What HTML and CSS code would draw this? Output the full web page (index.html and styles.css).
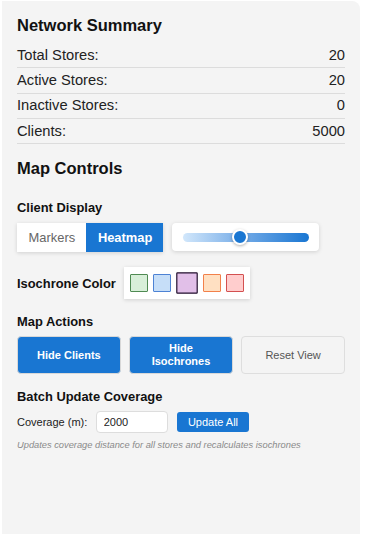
FILE: index.html
```html
<!DOCTYPE html>
<html lang="en">
  <head>
    <meta charset="UTF-8" />
    <meta name="viewport" content="width=device-width, initial-scale=1.0" />
    <title>Network Summary</title>
    <link rel="stylesheet" href="styles.css">
  </head>
  <body>
    <div class="panel">
      <h2>Network Summary</h2>
      <div class="summary">
        <div class="stat-row"><span>Total Stores:</span><span>20</span></div>
        <div class="stat-row"><span>Active Stores:</span><span>20</span></div>
        <div class="stat-row"><span>Inactive Stores:</span><span>0</span></div>
        <div class="stat-row"><span>Clients:</span><span>5000</span></div>
      </div>

      <h2 class="controls-title">Map Controls</h2>

      <div class="group">
        <h3>Client Display</h3>
        <div class="display-row">
          <div class="toggle">
            <button class="toggle-btn">Markers</button>
            <button class="toggle-btn active">Heatmap</button>
          </div>
          <div class="slider-card">
            <div class="track">
              <span class="thumb"></span>
            </div>
          </div>
        </div>
      </div>

      <div class="group color-row">
        <h3>Isochrone Color</h3>
        <div class="swatches">
          <span class="swatch green"></span>
          <span class="swatch blue"></span>
          <span class="swatch purple selected"></span>
          <span class="swatch orange"></span>
          <span class="swatch red"></span>
        </div>
      </div>

      <div class="group">
        <h3>Map Actions</h3>
        <div class="actions">
          <button class="action primary">Hide Clients</button>
          <button class="action primary">Hide Isochrones</button>
          <button class="action secondary">Reset View</button>
        </div>
      </div>

      <div class="group">
        <h3>Batch Update Coverage</h3>
        <div class="coverage-row">
          <label for="coverage">Coverage (m):</label>
          <input type="number" id="coverage" value="2000" />
          <button class="update-btn">Update All</button>
        </div>
        <p class="hint">Updates coverage distance for all stores and recalculates isochrones</p>
      </div>
    </div>
  </body>
</html>
```

FILE: styles.css
```css
body {
  font-family: "Liberation Sans", Arial, sans-serif;
  background: #ffffff;
  margin: 0;
  padding: 1px 0 0 2px;
  color: #222;
  overflow: hidden;
}

.panel {
  width: 358px;
  height: 533px;
  box-sizing: border-box;
  background: #f4f4f4;
  border-radius: 0 8px 0 0;
  padding: 15px 15px;
}

h2 {
  margin: 0 0 8px;
  font-size: 16.5px;
  line-height: 19px;
  font-weight: bold;
  color: #111;
}

h3 {
  margin: 0 0 7.5px;
  font-size: 12.9px;
  line-height: 15px;
  font-weight: bold;
  color: #111;
}

.summary {
  margin-bottom: 15px;
}

.stat-row {
  display: flex;
  justify-content: space-between;
  font-size: 14.7px;
  line-height: 17px;
  padding: 3.7px 0 3.6px;
  border-bottom: 1px solid #dcdcdc;
  color: #222;
}

.controls-title {
  margin-bottom: 22px;
}

.group {
  margin-bottom: 15px;
}

.display-row {
  display: flex;
  align-items: center;
  gap: 8.5px;
}

.toggle {
  display: flex;
  height: 29.6px;
  box-shadow: 0 1px 4px rgba(0, 0, 0, 0.15);
  background: #fff;
}

.toggle-btn {
  border: none;
  background: #fff;
  color: #666;
  font-family: inherit;
  font-size: 12.9px;
  padding: 0 11.6px;
  width: 69.3px;
}

.toggle-btn.active {
  background: #1976d2;
  color: #fff;
  font-weight: bold;
  width: 77px;
}

.slider-card {
  width: 147.6px;
  height: 28px;
  background: #fff;
  border-radius: 4px;
  box-shadow: 0 1px 4px rgba(0, 0, 0, 0.15);
  display: flex;
  align-items: center;
  justify-content: center;
}

.track {
  position: relative;
  width: 126px;
  height: 9px;
  border-radius: 5px;
  background: linear-gradient(to right, #d2e7fb, #6fa8e6 50%, #1976d2);
}

.thumb {
  position: absolute;
  left: 49px;
  top: -4px;
  width: 12px;
  height: 12px;
  border-radius: 50%;
  background: #1976d2;
  border: 2px solid #fff;
  box-shadow: 0 1px 3px rgba(0, 0, 0, 0.3);
}

.color-row {
  display: flex;
  align-items: center;
  gap: 8px;
}

.color-row h3 {
  margin: 0;
}

.swatches {
  display: flex;
  align-items: center;
  gap: 5.3px;
  background: #fff;
  padding: 6.8px 6px;
  box-shadow: 0 1px 4px rgba(0, 0, 0, 0.15);
}

.swatch {
  width: 16px;
  height: 16px;
  border: 1.5px solid;
  border-radius: 1px;
}

.swatch.selected {
  transform: scale(1.2);
  margin: 0 1.5px;
  border-color: #22102e !important;
}

.green { background: #d8efd9; border-color: #4f8a52; }
.blue { background: #c6def8; border-color: #4d82d4; }
.purple { background: #e1bfe8; }
.orange { background: #ffe0c2; border-color: #f2804a; }
.red { background: #ffcdcd; border-color: #d35050; }

.actions {
  display: grid;
  grid-template-columns: repeat(3, 1fr);
  gap: 8.3px;
}

.action {
  height: 37.3px;
  border-radius: 4px;
  font-family: inherit;
  font-size: 11px;
  line-height: 12.6px;
  padding: 0 10px;
}

.action.primary {
  background: #1976d2;
  color: #fff;
  font-weight: bold;
  border: 1px solid #d8d8d8;
}

.action.secondary {
  background: #f4f4f4;
  color: #555;
  border: 1px solid #dedede;
}

.coverage-row {
  display: flex;
  align-items: center;
  font-size: 11px;
  color: #222;
}

.coverage-row input {
  width: 72.6px;
  height: 21.6px;
  box-sizing: border-box;
  margin: 0 8.4px 0 8.4px;
  border: 1px solid #ddd;
  border-radius: 4px;
  background: #fff;
  padding: 0 7px;
  font-family: inherit;
  font-size: 11px;
  color: #222;
}

.update-btn {
  width: 72.6px;
  height: 20.4px;
  border: none;
  border-radius: 3px;
  background: #1976d2;
  color: #fff;
  font-family: inherit;
  font-size: 11px;
}

.hint {
  margin: 6.5px 0 0;
  font-size: 9.3px;
  line-height: 12px;
  font-style: italic;
  color: #8a8a8a;
}
```
